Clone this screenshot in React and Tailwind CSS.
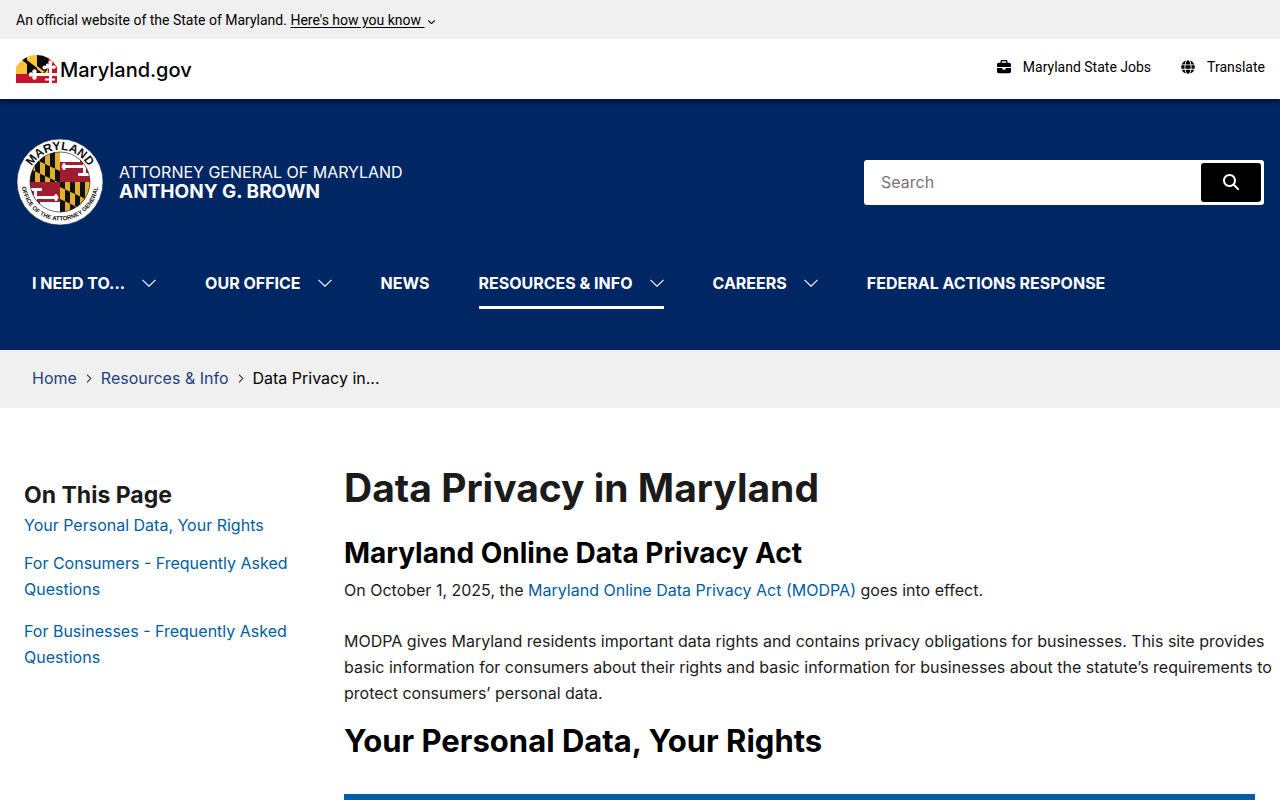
import { FaGlobe } from 'react-icons/fa'
import { FaBriefcase, FaMagnifyingGlass } from 'react-icons/fa6'

const navItems = [
  { label: 'I NEED TO...', menu: true },
  { label: 'OUR OFFICE', menu: true },
  { label: 'NEWS' },
  { label: 'RESOURCES & INFO', menu: true, active: true },
  { label: 'CAREERS', menu: true },
  { label: 'FEDERAL ACTIONS RESPONSE' }
]

function ChevronDown({ className }) {
  return (
    <svg className={className} viewBox="0 0 14 8" fill="none" stroke="currentColor" aria-hidden="true">
      <path d="M0.5 0.8L7 7.2L13.5 0.8" strokeWidth={1.1} vectorEffect="non-scaling-stroke" />
    </svg>
  )
}

function ChevronRight() {
  return (
    <svg className="w-[6px] h-[9px] text-[#444]" viewBox="0 0 6 9" fill="none" stroke="currentColor" aria-hidden="true">
      <path d="M1 0.7L4.8 4.5L1 8.3" strokeWidth={1.2} />
    </svg>
  )
}

function StateLogo() {
  return (
    <svg className="w-[41px] h-[28px]" viewBox="0 0 41 28" aria-hidden="true">
      <clipPath id="logo-arch">
        <path d="M0 28V12Q8 0 21 0Q33 0 41 12V28Z" />
      </clipPath>
      <g clipPath="url(#logo-arch)">
        <rect width="41" height="28" fill="#fec33a" />
        <path d="M6 5L11 1V5L21 13V0H33V12L28 19H11V9Z" fill="#0a0a0a" />
        <path d="M11 0H21V12L11 5Z" fill="#fec33a" />
        <path d="M21 11L29 17L26 18L21 14Z" fill="#fec33a" />
        <path d="M32 0H41V28H0V19H32Z" fill="#c8122c" />
        <g fill="#fff">
          <path d="M15 18H41V21H15Z" />
          <path d="M33 8H36V28H33Z" />
          <circle cx="15" cy="19.500" r="2.200" />
          <circle cx="18.500" cy="16.500" r="2.200" />
          <circle cx="18.500" cy="22.500" r="2.200" />
          <path d="M28 11H39V13.500H28Z" />
          <circle cx="28.500" cy="12.500" r="2" />
          <circle cx="34.500" cy="7.500" r="2" />
          <circle cx="31.500" cy="10" r="1.600" />
          <circle cx="38" cy="12" r="1.800" />
          <path d="M29 23.500H39V25.500H29Z" />
        </g>
      </g>
    </svg>
  )
}

// 30x30 quarter: six bars, colours swapped inside the diagonal band
function CalvertQuarter() {
  return (
    <g>
      <rect width="30" height="30" fill="#e0b12f" />
      <path d="M0 0H5V30H0ZM10 0H15V30H10ZM20 0H25V30H20Z" fill="#111" />
      <g clipPath="url(#seal-band)">
        <rect width="30" height="30" fill="#111" />
        <path d="M0 0H5V30H0ZM10 0H15V30H10ZM20 0H25V30H20Z" fill="#e0b12f" />
      </g>
    </g>
  )
}

function CrosslandQuarter() {
  return (
    <g>
      <rect width="30" height="30" fill="#fff" />
      <path d="M0 10H20V7H22V10H30V28H0Z" fill="#9f1d2f" />
      <path d="M4 13H23V10H26V22H23V16H4Z" fill="#fff" />
      <circle cx="4" cy="12.500" r="1.500" fill="#fff" />
      <circle cx="3" cy="14.500" r="1.500" fill="#fff" />
      <circle cx="4" cy="16.500" r="1.500" fill="#fff" />
      <path d="M18 21H30V24H18Z" fill="#fff" />
      <path d="M0 26H30V30H0Z" fill="#9f1d2f" />
    </g>
  )
}

function Seal() {
  return (
    <svg className="w-[88px] h-[88px]" viewBox="0 0 88 88" role="img" aria-label="Office of the Attorney General seal">
      <defs>
        <clipPath id="seal-flag">
          <circle cx="44" cy="44" r="30" />
        </clipPath>
        <clipPath id="seal-band">
          <path d="M0 5L30 19V31L0 17Z" />
        </clipPath>
        <path id="seal-top" d="M12 44A32 32 0 0 1 76 44" />
        <path id="seal-bottom" d="M5.500 44A38.500 38.500 0 0 0 82.500 44" />
      </defs>
      <circle cx="44" cy="44" r="43" fill="#fff" stroke="#1c2b4a" strokeWidth="0.600" />
      <g clipPath="url(#seal-flag)">
        <g transform="translate(14 14)">
          <CalvertQuarter />
        </g>
        <g transform="translate(44 44)">
          <CalvertQuarter />
        </g>
        <g transform="translate(44 14)">
          <CrosslandQuarter />
        </g>
        <g transform="translate(44 74) rotate(180)">
          <CrosslandQuarter />
        </g>
      </g>
      <circle cx="44" cy="44" r="30" fill="none" stroke="#111" strokeWidth="0.600" />
      <g fill="#111" fontFamily="Liberation Sans, sans-serif" textAnchor="middle">
        <text fontSize="12" fontWeight="700">
          <textPath href="#seal-top" startOffset="50%">MARYLAND</textPath>
        </text>
        <text fontSize="6" fontWeight="700">
          <textPath href="#seal-bottom" startOffset="50%">OFFICE OF THE ATTORNEY GENERAL</textPath>
        </text>
      </g>
    </svg>
  )
}

function TopBar() {
  return (
    <div className="bg-[#f0f0f0] h-[39px] px-4 flex items-center text-sm text-black font-['Roboto',sans-serif]">
      <p>
        An official website of the State of Maryland.{' '}
        <button className="underline underline-offset-2 cursor-pointer">Here's how you know&nbsp;</button>
      </p>
      <ChevronDown className="w-[7px] h-[4px] ml-[3px] mt-1" />
    </div>
  )
}

function StateBar() {
  return (
    <div className="relative bg-white h-[60px] pl-4 pr-[15px] flex items-center justify-between text-black shadow-[0_4px_4px_rgba(0,0,0,0.4)]">
      <a href="#" className="flex items-center gap-[3px] text-xl font-medium">
        <StateLogo />
        <span className="pt-[2px]">Maryland.gov</span>
      </a>
      <ul className="flex gap-[30px] text-sm pb-1 font-['Roboto',sans-serif]">
        <li>
          <a href="#" className="flex items-center gap-3">
            <FaBriefcase className="size-[14px]" />
            Maryland State Jobs
          </a>
        </li>
        <li>
          <a href="#" className="flex items-center gap-3">
            <FaGlobe className="size-[14px]" />
            Translate
          </a>
        </li>
      </ul>
    </div>
  )
}

function SiteHeader() {
  return (
    <header className="bg-[#002664] text-white px-4 pt-[39px] pb-[41px]">
      <div className="flex items-center justify-between">
        <a href="#" className="flex items-center gap-[15px]">
          <Seal />
          <span className="flex flex-col">
            <span className="text-base leading-5">ATTORNEY GENERAL OF MARYLAND</span>
            <span className="text-[19px] leading-5 font-bold">ANTHONY G. BROWN</span>
          </span>
        </a>
        <form className="flex w-[400px] h-[45px] bg-white rounded-[3px] p-[3px]" onSubmit={(e) => e.preventDefault()}>
          <input
            type="search"
            aria-label="Search"
            placeholder="Search"
            className="flex-1 min-w-0 px-[14px] text-base text-black placeholder:text-[#757575] outline-none"
          />
          <button
            type="submit"
            aria-label="Submit search"
            className="w-[60px] bg-black rounded-[3px] flex items-center justify-center"
          >
            <FaMagnifyingGlass className="size-4" />
          </button>
        </form>
      </div>
      <nav className="mt-8 px-4">
        <ul className="flex gap-[49px]">
          {navItems.map((item) => (
            <li key={item.label}>
              <button
                className={
                  'flex items-center gap-[17px] h-[51px] pt-[2px] text-base font-bold border-b-[3px] whitespace-nowrap ' +
                  (item.active ? 'border-white' : 'border-transparent')
                }
              >
                {item.label}
                {item.menu && <ChevronDown className="w-[14px] h-[8px]" />}
              </button>
            </li>
          ))}
        </ul>
      </nav>
    </header>
  )
}

function Breadcrumb() {
  return (
    <nav aria-label="Breadcrumb" className="bg-[#f0f0f0] h-[58px] px-8 pb-[2px] flex items-center">
      <ol className="flex items-center gap-[9px] text-base">
        <li><a href="#" className="text-[#1f4080]">Home</a></li>
        <li><ChevronRight /></li>
        <li><a href="#" className="text-[#1f4080]">Resources &amp; Info</a></li>
        <li><ChevronRight /></li>
        <li className="text-black">Data Privacy in...</li>
      </ol>
    </nav>
  )
}

function SideNav() {
  return (
    <aside className="w-[264px] shrink-0 pt-[17px]">
      <h2 className="text-[23px] leading-7 font-bold text-[#1b1b1b]">On This Page</h2>
      <ul className="mt-[7px] flex flex-col gap-4 text-base leading-[26px] text-[#005ea2]">
        <li className="leading-[18px]"><a href="#rights">Your Personal Data, Your Rights</a></li>
        <li><a href="#consumers">For Consumers - Frequently Asked Questions</a></li>
        <li><a href="#businesses">For Businesses - Frequently Asked Questions</a></li>
      </ul>
    </aside>
  )
}

function Content() {
  return (
    <main className="flex-1 min-w-0 text-base leading-[26px] text-[#1b1b1b]">
      <h1 className="text-[39px] leading-[48px] font-bold">Data Privacy in Maryland</h1>
      <h2 className="mt-[24px] text-[28px] leading-[34px] font-bold text-black">Maryland Online Data Privacy Act</h2>
      <p className="mt-[7px]">
        On October 1, 2025, the <a href="#" className="text-[#005ea2]">Maryland Online Data Privacy Act (MODPA)</a> goes
        into effect.
      </p>
      {/* runs a little into the page gutter */}
      <p className="mt-[25px] -mr-[23px]">
        MODPA gives Maryland residents important data rights and contains privacy obligations for businesses. This site
        provides basic information for consumers about their rights and basic information for businesses about the
        statute’s requirements to protect consumers’ personal data.
      </p>
      <h2 id="rights" className="mt-[15px] text-[31px] leading-[40px] font-bold text-black">
        Your Personal Data, Your Rights
      </h2>
      <div className="mt-[33px] h-12 bg-[#005ea2]" />
    </main>
  )
}

function App() {
  return (
    <div className="h-screen overflow-hidden bg-white font-['Inter',sans-serif]">
      <TopBar />
      <StateBar />
      <SiteHeader />
      <Breadcrumb />
      <div className="flex gap-14 pl-6 pr-[25px] pt-[56px]">
        <SideNav />
        <Content />
      </div>
    </div>
  )
}

export default App
